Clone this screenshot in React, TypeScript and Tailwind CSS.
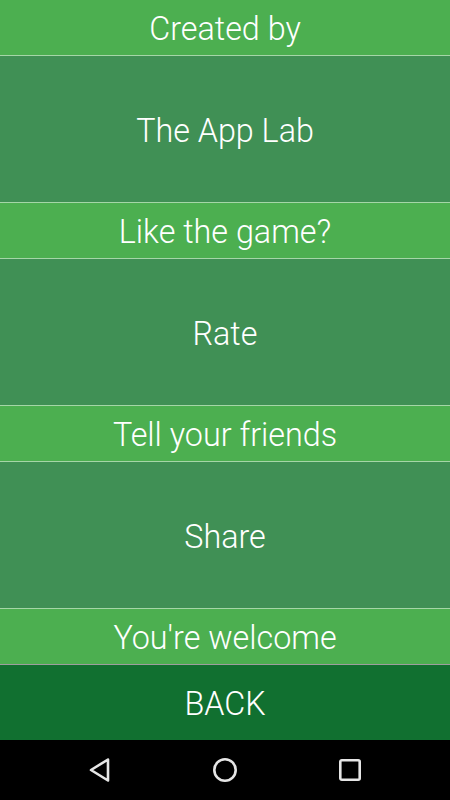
const font = { fontFamily: "Roboto, 'Noto Sans', sans-serif" };

function Header({ text, last }: { text: string; last?: boolean }) {
  return (
    <div
      className={`h-[56px] flex items-center justify-center bg-[#4caf50] border-b pt-[4px] ${
        last ? "border-[#9e9e9e]" : "border-[#a5d6a7]"
      }`}
    >
      <span className="text-[32.3px] font-light text-white leading-none">{text}</span>
    </div>
  );
}

function Tile({ text }: { text: string }) {
  return (
    <div className="h-[147px] flex items-center justify-center bg-[#409055] border-b border-[#a5d6a7] pt-[5px]">
      <span className="text-[32.3px] font-light text-white leading-none">{text}</span>
    </div>
  );
}

export default function App() {
  return (
    <div className="w-[450px] h-[800px] flex flex-col overflow-hidden" style={font}>
      <Header text="Created by" />
      <Tile text="The App Lab" />
      <Header text="Like the game?" />
      <Tile text="Rate" />
      <Header text="Tell your friends" />
      <Tile text="Share" />
      <Header text="You're welcome" last />
      <div className="flex-1 flex items-center justify-center bg-[#117030] pt-[4px]">
        <span className="text-[32.3px] font-light text-white leading-none">BACK</span>
      </div>
      <div className="h-[60px] bg-black flex items-center justify-center">
        <div className="w-[125px] flex justify-center">
          <svg width="24" height="26" viewBox="0 0 24 26">
            <path d="M20 2.5 L3 13 L20 23.5 Z" fill="none" stroke="#e6e6e6" strokeWidth="2.6" strokeLinejoin="round" />
          </svg>
        </div>
        <div className="w-[125px] flex justify-center">
          <svg width="26" height="26" viewBox="0 0 26 26">
            <circle cx="13" cy="13" r="10.7" fill="none" stroke="#e6e6e6" strokeWidth="2.6" />
          </svg>
        </div>
        <div className="w-[125px] flex justify-center">
          <svg width="24" height="24" viewBox="0 0 24 24">
            <rect x="2.3" y="2.3" width="19.4" height="19.4" rx="1.5" fill="none" stroke="#e6e6e6" strokeWidth="2.6" />
          </svg>
        </div>
      </div>
    </div>
  );
}
